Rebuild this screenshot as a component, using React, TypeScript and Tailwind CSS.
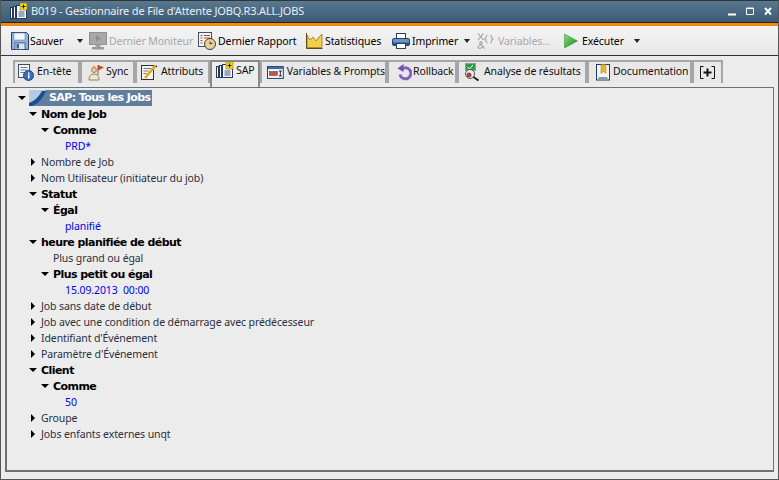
import React from "react";

const F = { fontFamily: '"Noto Sans", "DejaVu Sans", sans-serif' };

function Save() {
  return (
    <svg width="18" height="18" viewBox="0 0 18 18">
      <path d="M.5.5h15l2 2v15H.5z" fill="#8fb2e0" stroke="#27406f" />
      <rect x="3" y="1" width="11" height="7" fill="#f4f7fb" stroke="#6a86b4" strokeWidth=".6" />
      <rect x="4" y="11" width="10" height="6.500" fill="#dfe3ea" stroke="#27406f" strokeWidth=".7" />
      <rect x="5.500" y="12" width="2.500" height="4.500" fill="#3d5f95" />
    </svg>
  );
}
function Monitor() {
  return (
    <svg width="18" height="18" viewBox="0 0 18 18">
      <rect x=".5" y=".5" width="17" height="12" fill="#a8a8a8" stroke="#909090" />
      <path d="M7 3.500l5 3-5 3z" fill="#8c8c8c" />
      <rect x="6.500" y="12.500" width="5" height="2.500" fill="#a0a0a0" />
      <rect x="3" y="15" width="12" height="2.500" fill="#9a9a9a" />
    </svg>
  );
}
function Report() {
  return (
    <svg width="18" height="18" viewBox="0 0 18 18">
      <rect x=".5" y=".5" width="13" height="14" fill="#f7f7f2" stroke="#3c4f78" />
      <path d="M2.500 3.500h2M6 3.500h6M2.500 6h2M6 6h6M2.500 8.500h2M2.500 11h2" stroke="#b5442e" />
      <circle cx="12" cy="12" r="5.500" fill="#e8d29a" stroke="#44403a" />
      <path d="M12 9.500V12l2.500-1" stroke="#333" fill="none" />
    </svg>
  );
}
function Stats() {
  return (
    <svg width="17" height="16" viewBox="0 0 17 16">
      <path d="M1 2l3 5 3-3 3 4 3-4 3-3v13.500H1z" fill="#f2cf4a" stroke="#8a6a10" strokeWidth=".7" />
      <path d="M.5 0v15.500h16" fill="none" stroke="#5c4a15" />
    </svg>
  );
}
function Printer() {
  return (
    <svg width="18" height="16" viewBox="0 0 18 16">
      <rect x="4.500" y=".5" width="9" height="5.500" fill="#fff" stroke="#2b3f66" />
      <rect x=".5" y="5.500" width="17" height="7" rx="1.500" fill="#6d94c8" stroke="#27406f" />
      <rect x="1" y="9.500" width="16" height="3" fill="#2f5488" />
      <rect x="4.500" y="10.500" width="9" height="5" fill="#fff" stroke="#2b3f66" />
      <rect x="13.500" y="7" width="2" height="1.500" fill="#47b04b" />
    </svg>
  );
}
function Vars() {
  return (
    <svg width="19" height="18" viewBox="0 0 19 18" fill="none" stroke="#a6a6a6" strokeWidth="1.200">
      <path d="M2 1l6 7M8 1L2 8" />
      <path d="M12 3c-2 0-1 3.500-2.500 4 1.500.5.5 4 2.500 4M15 3c2 0 1 3.500 2.500 4-1.500.5-.5 4-2.500 4" />
      <path d="M9 17L4 11.500c-.8-1.500 2.500-2.500 2.500-.5 0 1.500-4.500 3-4.500 4.500S6 17.800 8 14" />
    </svg>
  );
}
function Play() {
  return (
    <svg width="16" height="16" viewBox="0 0 16 16">
      <defs>
        <linearGradient id="pl" x1="0" y1="0" x2="1" y2="1">
          <stop offset="0" stopColor="#8ddb7c" />
          <stop offset="1" stopColor="#0f8a1f" />
        </linearGradient>
      </defs>
      <path d="M1.500 1l13 7-13 7z" fill="url(#pl)" stroke="#3a9a3a" strokeWidth=".6" />
    </svg>
  );
}
function Info() {
  return (
    <svg width="17" height="17" viewBox="0 0 17 17">
      <rect x="1.500" y=".5" width="11" height="13" fill="#f7f7f7" stroke="#3d4f73" />
      <path d="M3.500 3.500h7M3.500 6h7M3.500 8.500h4" stroke="#6c7fa3" />
      <circle cx="11.500" cy="11.500" r="5" fill="#3a70b6" stroke="#1e4681" />
      <rect x="11" y="8.500" width="1.500" height="1.500" fill="#fff" />
      <rect x="11" y="10.500" width="1.500" height="4" fill="#fff" />
    </svg>
  );
}
function SyncI() {
  return (
    <svg width="18" height="17" viewBox="0 0 18 17">
      <path d="M11 1v10" stroke="#7a5a35" />
      <path d="M11 1l6 2.500-6 3z" fill="#c9422f" />
      <circle cx="7" cy="6" r="2.500" fill="#f0c9a0" stroke="#6b4a2a" strokeWidth=".6" />
      <path d="M5 4l2-3 2 3z" fill="#d9a04b" />
      <path d="M2 16c0-4 2-6 5-6s5 2 5 6z" fill="#efe6d2" stroke="#6b5a3a" strokeWidth=".7" />
    </svg>
  );
}
function Attr() {
  return (
    <svg width="17" height="17" viewBox="0 0 17 17">
      <rect x=".5" y="1.500" width="12" height="14" fill="#f4f4ef" stroke="#333" />
      <path d="M2.500 4.500h8M2.500 7h5M2.500 9.500h3" stroke="#7a7a7a" />
      <path d="M14.500 1.500L4 14" stroke="#e0a71f" strokeWidth="2.500" />
      <path d="M15 1l1.500 1.500-2 1z" fill="#333" />
    </svg>
  );
}
function SapI() {
  return (
    <svg width="18" height="18" viewBox="0 0 18 18">
      <rect x=".5" y="4.500" width="2" height="11" fill="#fff" stroke="#24375f" />
      <rect x="3.500" y="3.500" width="2" height="12" fill="#fff" stroke="#24375f" />
      <rect x="6.500" y="2.500" width="10" height="13" fill="#f8f8f8" stroke="#24375f" />
      <path d="M8.500 9h6M8.500 11h6M8.500 13h6" stroke="#3d5580" />
      <rect x="10" y="0" width="7" height="7" fill="#f5d327" stroke="#7a6a12" strokeWidth=".5" />
      <path d="M13.500 1.500v4M11.500 3.500h4" stroke="#222" />
    </svg>
  );
}
function VarsTab() {
  return (
    <svg width="18" height="17" viewBox="0 0 18 17">
      <rect x=".5" y="2.500" width="16" height="12" fill="#f4f6fa" stroke="#1f3a6b" />
      <rect x="1" y="3" width="15" height="2" fill="#3a66a8" />
      <rect x="2.500" y="7.500" width="8" height="4" fill="#c0544a" stroke="#6b2a22" strokeWidth=".5" />
      <path d="M12 7h3M12 12h3M13.500 7v5" stroke="#222" />
    </svg>
  );
}
function Rollback() {
  return (
    <svg width="16" height="17" viewBox="0 0 16 17" fill="none">
      <path d="M5 6a5.500 5.500 0 1 1-1 4.500" stroke="#7a63b8" strokeWidth="3" />
      <path d="M7.500 0v8L1.500 4.500z" fill="#6a54ad" />
    </svg>
  );
}
function Analyse() {
  return (
    <svg width="17" height="18" viewBox="0 0 17 18">
      <rect x="1.500" y=".5" width="10" height="7" fill="#2f9a4a" stroke="#8a9ab5" />
      <path d="M3.500 4l2 2 3.500-4" stroke="#fff" fill="none" />
      <circle cx="6" cy="11" r="4.500" fill="#e8eef5" stroke="#555" />
      <circle cx="5" cy="12" r="2.500" fill="#b53a3a" />
      <path d="M9.500 14l5 3.500" stroke="#222" strokeWidth="2" />
    </svg>
  );
}
function Doc() {
  return (
    <svg width="14" height="17" viewBox="0 0 14 17">
      <rect x=".5" y=".5" width="13" height="15.500" fill="#f5f5ef" stroke="#1f3a6b" />
      <path d="M5 .5h5v9l-2.500-2-2.500 2z" fill="#e8b62c" stroke="#a87d12" strokeWidth=".5" />
      <path d="M2.500 14h9" stroke="#1f3a6b" />
    </svg>
  );
}
function Plus() {
  return (
    <svg width="15" height="13" viewBox="0 0 15 13" fill="none" stroke="#111">
      <path d="M3.500.5h-3v12h3M11.500.5h3v12h-3" />
      <path d="M7.500 2.500v8M3.500 6.500h8" strokeWidth="2" />
    </svg>
  );
}
function Win({ k }: { k: "min" | "max" | "x" }) {
  return (
    <svg width="9" height="9" viewBox="0 0 9 9" fill="none" stroke="#fff">
      {k === "min" && <path d="M0 7.500h8" strokeWidth="2" />}
      {k === "max" && <path d="M.5 1h7v6.500h-7zM.5 1.500h7" />}
      {k === "x" && <path d="M1 1l6 6.500M7 1L1 7.500" strokeWidth="2" />}
    </svg>
  );
}
function Drop() {
  return <span className="w-0 h-0 border-x-[3.5px] border-x-transparent border-t-[4px] border-t-[#222]" />;
}
function Arrow({ open }: { open: boolean }) {
  return open ? (
    <span className="w-0 h-0 border-x-[4px] border-x-transparent border-t-[4px] border-t-black" />
  ) : (
    <span className="w-0 h-0 border-y-[4px] border-y-transparent border-l-[4px] border-l-black" />
  );
}

function Tool({ icon, label, off, drop, w, lm = "ml-[2px]" }: { icon: React.ReactNode; label: string; off?: boolean; drop?: boolean; w: string; lm?: string }) {
  return (
    <div className={`flex items-center shrink-0 ${w}`}>
      <span className="w-[18px] flex justify-center shrink-0">{icon}</span>
      <span className={`${lm} pt-[2px] text-[10.5px] tracking-[-0.1px] whitespace-nowrap ${off ? "text-[#a8a8a8]" : "text-black"}`}>{label}</span>
      {drop && <span className="ml-auto mr-[6px] flex"><Drop /></span>}
    </div>
  );
}

function Tab({ icon, label, active, w, pl, gap }: { icon: React.ReactNode; label?: string; active?: boolean; w: string; pl: string; gap: string }) {
  return (
    <div
      className={`flex items-center shrink-0 border-2 border-b-0 ${w} ${pl} ${gap} ${
        active ? "h-[27px] pb-[7px] relative z-10 -mb-[1px] bg-[#ececec] border-[#8a8a8a]" : "h-[23px] pb-[1px] bg-[#e8e8e8] border-[#a6a6a6]"
      }`}
    >
      {icon}
      {label && <span className="text-[10.5px] tracking-[-0.1px] text-[#111] whitespace-nowrap">{label}</span>}
    </div>
  );
}

type N = { t: string; d: number; open?: boolean; bold?: boolean; blue?: boolean; noArrow?: boolean };
const rows: N[] = [
  { t: "Nom de Job", d: 0, open: true, bold: true },
  { t: "Comme", d: 1, open: true, bold: true },
  { t: "PRD*", d: 2, blue: true },
  { t: "Nombre de Job", d: 0 },
  { t: "Nom Utilisateur (initiateur du job)", d: 0 },
  { t: "Statut", d: 0, open: true, bold: true },
  { t: "Égal", d: 1, open: true, bold: true },
  { t: "planifié", d: 2, blue: true },
  { t: "heure planifiée de début", d: 0, open: true, bold: true },
  { t: "Plus grand ou égal", d: 1, noArrow: true },
  { t: "Plus petit ou égal", d: 1, open: true, bold: true },
  { t: "15.09.2013  00:00", d: 2, blue: true },
  { t: "Job sans date de début", d: 0 },
  { t: "Job avec une condition de démarrage avec prédécesseur", d: 0 },
  { t: "Identifiant d'Événement", d: 0 },
  { t: "Paramètre d'Événement", d: 0 },
  { t: "Client", d: 0, open: true, bold: true },
  { t: "Comme", d: 1, open: true, bold: true },
  { t: "50", d: 2, blue: true },
  { t: "Groupe", d: 0 },
  { t: "Jobs enfants externes unqt", d: 0 },
];

function Row({ n }: { n: N }) {
  const leaf = n.blue || n.noArrow;
  const pad = n.blue ? "pl-[58px]" : n.noArrow ? "pl-[46px]" : n.d === 0 ? "pl-[22px]" : "pl-[34px]";
  return (
    <div className={`h-4 flex items-center ${pad}`}>
      {!leaf && (
        <span className="w-[8px] mr-[4px] flex justify-center shrink-0">
          <Arrow open={!!n.open} />
        </span>
      )}
      <span
        className={`whitespace-pre pt-[2px] ${
          n.bold
            ? "text-[11px] font-bold text-black"
            : n.blue
              ? "text-[10.5px] tracking-[-0.1px] text-[#0000f0]"
              : "text-[10.5px] tracking-[-0.1px] text-[#2a3040]"
        }`}
        style={n.bold ? { fontFamily: '"DejaVu Sans", sans-serif', letterSpacing: "-0.55px" } : undefined}
      >
        {n.t}
      </span>
    </div>
  );
}

export default function App() {
  return (
    <div style={F} className="w-[779px] h-[480px] flex flex-col overflow-hidden bg-[#ececec] border-x border-b border-[#555]">
      <div className="h-[22px] shrink-0 flex items-center bg-gradient-to-b from-[#58788f] to-[#3a5a76] pl-[9px] pr-[5px] border-t border-[#333]">
        <SapI />
        <span className="ml-[3px] text-[11px] tracking-[-0.17px] text-[#e8eef2] whitespace-nowrap">B019 - Gestionnaire de File d'Attente JOBQ.R3.ALL.JOBS</span>
        <div className="ml-auto flex items-center gap-[9px]">
          <Win k="min" />
          <Win k="max" />
          <Win k="x" />
        </div>
      </div>
      <div className="h-px shrink-0 bg-[#222]" />
      <div className="h-[3px] shrink-0 bg-[#f58a07]" />
      <div className="h-[29px] shrink-0 flex items-center pl-[10px] pt-[1px] bg-gradient-to-b from-[#f4f4f4] to-[#e8e8e8]">
        <Tool w="w-[78px]" icon={<Save />} label="Sauver" drop lm="ml-px" />
        <Tool w="w-[109px]" icon={<Monitor />} label="Dernier Moniteur" off />
        <Tool w="w-[107px]" icon={<Report />} label="Dernier Rapport" />
        <Tool w="w-[87px]" icon={<Stats />} label="Statistiques" />
        <Tool w="w-[84px]" icon={<Printer />} label="Imprimer" drop />
        <Tool w="w-[86px]" icon={<Vars />} label="Variables..." off lm="ml-[4px]" />
        <Tool w="w-[84px]" icon={<Play />} label="Exécuter" drop />
      </div>
      <div className="h-px shrink-0 bg-[#333]" />
      <div className="h-[31px] shrink-0 flex items-start pl-[12px] pt-[4px] bg-[#ececec]">
        <Tab w="w-[67px]" pl="pl-[2px]" gap="gap-[3px]" icon={<Info />} label="En-tête" />
        <Tab w="w-[55px]" pl="pl-[5px]" gap="gap-[1px]" icon={<SyncI />} label="Sync" />
        <Tab w="w-[75px]" pl="pl-[4px]" gap="gap-[3px]" icon={<Attr />} label="Attributs" />
        <Tab active w="w-[50px]" pl="pl-[4px]" gap="gap-[2px]" icon={<SapI />} label="SAP" />
        <Tab w="w-[127px]" pl="pl-[5px]" gap="gap-[2px]" icon={<VarsTab />} label="Variables & Prompts" />
        <Tab w="w-[70px]" pl="pl-[7px]" gap="gap-[1px]" icon={<Rollback />} label="Rollback" />
        <Tab w="w-[130px]" pl="pl-[5px]" gap="gap-[3px]" icon={<Analyse />} label="Analyse de résultats" />
        <Tab w="w-[105px]" pl="pl-[7px]" gap="gap-[3px]" icon={<Doc />} label="Documentation" />
        <Tab w="w-[31px]" pl="pl-[6px]" gap="gap-0" icon={<Plus />} />
      </div>
      <div className="flex-1 mx-[4px] mb-[7px] border border-[#707070] border-l-2 border-b-2 bg-[#ececec] pt-[2px] min-h-0">
        <div className="h-4 flex items-center pl-[11px]">
          <span className="w-[8px] flex justify-center shrink-0"><Arrow open /></span>
          <span className="ml-[3px] h-4 flex items-center bg-[#5f7f9c] pr-[2px]">
            <svg width="17" height="16" viewBox="0 0 17 16" className="shrink-0">
              <path d="M0 0h17L0 16z" fill="#b4cbe4" />
              <path d="M0 16v-3C6 11 10 6 13 1h4C14 8 9 14 3 16z" fill="#1a4f96" />
            </svg>
            <span
              className="ml-[3px] text-[11px] font-bold text-white whitespace-nowrap"
              style={{ fontFamily: '"DejaVu Sans", sans-serif', letterSpacing: "-0.6px" }}
            >
              SAP: Tous les Jobs
            </span>
          </span>
        </div>
        {rows.map((n, i) => (
          <Row key={i} n={n} />
        ))}
      </div>
    </div>
  );
}
